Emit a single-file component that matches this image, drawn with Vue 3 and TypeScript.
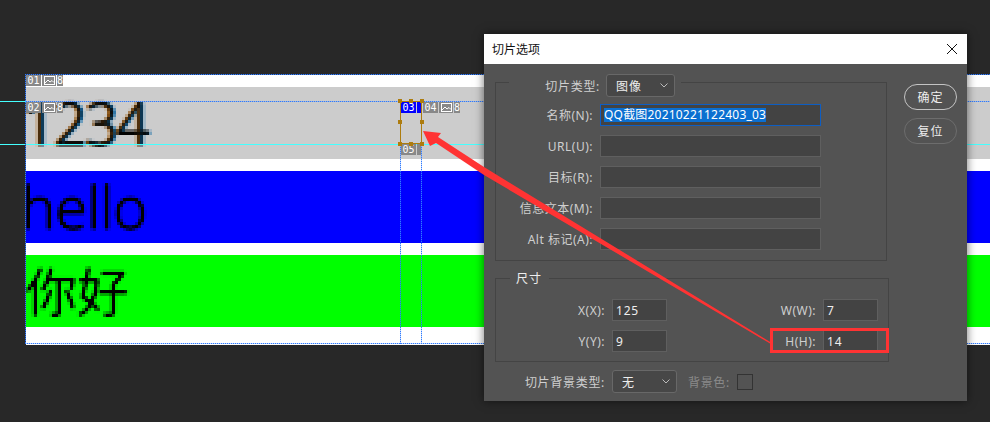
<template>
  <div class="page">
    <svg class="defs" width="0" height="0" aria-hidden="true">
      <!-- the document is zoomed in, so its text shows chunky 3px pixels -->
      <filter id="pixelate" x="0" y="0" width="1" height="1" color-interpolation-filters="sRGB">
        <feGaussianBlur in="SourceGraphic" stdDeviation="0.8" result="soft" />
        <feComponentTransfer in="soft" result="solid">
          <feFuncA type="linear" slope="1.7" />
        </feComponentTransfer>
        <feFlood x="1" y="1" width="1" height="1" />
        <feComposite width="3" height="3" />
        <feTile result="grid" />
        <feComposite in="solid" in2="grid" operator="in" />
        <feMorphology operator="dilate" radius="1" />
      </filter>
    </svg>

    <!-- document being sliced -->
    <section class="canvas">
      <div class="strip" />
      <div class="band band--gray"><span class="big big--digits">1234</span></div>
      <div class="strip" />
      <div class="band band--blue"><span class="big big--latin">hello</span></div>
      <div class="strip" />
      <div class="band band--green"><span class="big big--cjk">你好</span></div>
      <div class="strip strip--end" />
    </section>

    <!-- guides and slices sit on a free canvas -->
    <i class="guide" style="top: 144px; left: 0; width: 990px" />
    <i class="guide" style="top: 101px; left: 0; width: 26px" />
    <i class="dots dots--h" style="top: 74px; left: 25px; width: 965px" />
    <i class="dots dots--h" style="top: 101px; left: 26px; width: 964px" />
    <i class="dots dots--h" style="top: 343px; left: 25px; width: 965px" />
    <i class="dots dots--v" style="top: 74px; left: 25px; height: 270px" />
    <i class="dots dots--v" style="top: 101px; left: 400px; height: 243px" />
    <i class="dots dots--v" style="top: 101px; left: 421px; height: 243px" />

    <div
      v-for="tag in sliceTags"
      :key="tag.id"
      class="tag"
      :class="{ 'tag--active': tag.active }"
      :style="{ left: tag.x + 'px', top: tag.y + 'px' }"
    >
      <b class="tag__cell tag__num">{{ tag.id }}</b>
      <b v-if="tag.clip" class="tag__cell tag__clip" />
      <template v-else>
        <b class="tag__cell tag__icon">
          <svg width="11" height="9" viewBox="0 0 11 9">
            <rect x="0.5" y="0.5" width="10" height="8" fill="none" stroke="#fff" />
            <path d="M1 7 4 4l2 2 2-1.5L10 6.500" fill="none" stroke="#fff" />
          </svg>
        </b>
        <b class="tag__cell tag__link">8</b>
      </template>
    </div>

    <div class="selection">
      <i v-for="h in handles" :key="h" class="handle" :class="h" />
    </div>

    <!-- dialog -->
    <div class="dialog">
      <header class="dialog__title">
        <span>切片选项</span>
        <svg width="12" height="12" viewBox="0 0 12 12">
          <path d="M1 1 11 11M11 1 1 11" stroke="#111" stroke-width="1" fill="none" />
        </svg>
      </header>

      <div class="dialog__body">
        <div class="main">
          <div class="group group--slice">
            <div class="legend legend--type">
              <label class="lbl lbl--wide">切片类型:</label>
              <div class="select select--type">
                <span>图像</span>
                <svg class="chev" width="8" height="5" viewBox="0 0 8 5"><path d="M.5.5 4 4 7.500.5" /></svg>
              </div>
            </div>
            <div class="fields">
              <template v-for="f in fields" :key="f.label">
                <label class="lbl">{{ f.label }}</label>
                <div class="input" :class="{ 'input--focus': f.value }">
                  <span v-if="f.value" class="picked">{{ f.value }}</span>
                </div>
              </template>
            </div>
          </div>

          <div class="group group--size">
            <div class="legend legend--size">尺寸</div>
            <div class="sizes">
              <template v-for="s in sizes" :key="s.label">
                <label class="lbl">{{ s.label }}</label>
                <div class="input input--num">{{ s.value }}</div>
              </template>
            </div>
          </div>

          <div class="bg-row">
            <label class="lbl lbl--wide lbl--bg">切片背景类型:</label>
            <div class="select select--bg">
              <span>无</span>
              <svg class="chev" width="8" height="5" viewBox="0 0 8 5"><path d="M.5.5 4 4 7.500.5" /></svg>
            </div>
            <span class="lbl lbl--wide lbl--off">背景色:</span>
            <i class="swatch" />
          </div>
        </div>

        <div class="actions">
          <button class="btn btn--primary">确定</button>
          <button class="btn">复位</button>
        </div>
      </div>
    </div>

    <!-- red annotation on top of everything -->
    <svg class="annotation" width="990" height="422" viewBox="0 0 990 422">
      <polygon
        points="423,131 441,133 438,137 484,167 771,342.500 770,343.500 484,175 436,143 430,146"
        fill="#ff3333"
      />
      <rect x="771.500" y="329.500" width="116" height="22" fill="none" stroke="#ff3333" stroke-width="3" />
    </svg>
  </div>
</template>

<script setup lang="ts">
interface SliceTag {
  id: string
  x: number
  y: number
  active?: boolean
  clip?: boolean
}

const sliceTags: SliceTag[] = [
  { id: '01', x: 26, y: 75 },
  { id: '02', x: 26, y: 102 },
  { id: '03', x: 401, y: 102, active: true, clip: true },
  { id: '04', x: 423, y: 102 },
  { id: '05', x: 401, y: 144, clip: true },
]

const handles = ['tl', 'tc', 'tr', 'ml', 'mr', 'bl', 'bc', 'br']

const fields = [
  { label: '名称(N):', value: 'QQ截图20210221122403_03' },
  { label: 'URL(U):', value: '' },
  { label: '目标(R):', value: '' },
  { label: '信息文本(M):', value: '' },
  { label: 'Alt 标记(A):', value: '' },
]

const sizes = [
  { label: 'X(X):', value: '125' },
  { label: 'W(W):', value: '7' },
  { label: 'Y(Y):', value: '9' },
  { label: 'H(H):', value: '14' },
]
</script>

<style>
html,
body {
  margin: 0;
  background: #282828;
}
</style>

<style scoped>
.page {
  position: relative;
  width: 990px;
  height: 422px;
  overflow: hidden;
  background: #282828;
  padding: 75px 0 0 26px;
  box-sizing: border-box;
  font-family: "Noto Sans", "Noto Sans CJK SC", sans-serif;
  font-size: 12px;
}

.defs {
  position: absolute;
}

.canvas {
  width: 964px;
  display: flex;
  flex-direction: column;
  background: #fff;
  overflow: hidden;
}

.strip {
  height: 12px;
}

.strip--end {
  height: 18px;
}

.band {
  height: 72px;
  display: flex;
  align-items: center;
}

.band--gray {
  background: #ccc;
}

.band--blue {
  background: #00f;
}

.band--green {
  background: #0f0;
}

.big {
  color: #000;
  font-size: 58px;
  line-height: 72px;
  font-weight: 300;
  font-family: "Open Sans", "Noto Sans CJK SC", sans-serif;
  filter: url(#pixelate);
}

.big--digits {
  margin-left: -3px;
  letter-spacing: -2px;
  /* the source text was LCD-antialiased before it got zoomed */
  text-shadow: -2px 0 rgba(178, 108, 28, 0.75), 2px 0 rgba(30, 125, 190, 0.75);
}

.big--latin {
  margin-left: -5px;
}

.big--cjk {
  font-family: "Noto Sans CJK SC", sans-serif;
  font-size: 52px;
  margin: -3px 0 0 -1px;
}

.guide {
  position: absolute;
  height: 1px;
  background: #4ff;
}

.dots {
  position: absolute;
}

.dots--h {
  height: 1px;
  background: repeating-linear-gradient(to right, #2f7bff 0 1px, rgba(47, 123, 255, 0.3) 1px 2px);
}

.dots--v {
  width: 1px;
  background: repeating-linear-gradient(to bottom, #2f7bff 0 1px, rgba(47, 123, 255, 0.3) 1px 2px);
}

.tag {
  position: absolute;
  display: flex;
  gap: 1px;
  height: 11px;
  font-family: "DejaVu Sans Mono", monospace;
  font-size: 10px;
  line-height: 11px;
  color: #fff;
}

.tag__cell {
  display: flex;
  align-items: center;
  justify-content: center;
  font-weight: 400;
  background: #888;
}

.tag__num {
  width: 15px;
}

.tag__icon {
  width: 14px;
}

.tag__link {
  width: 6px;
}

.tag__clip {
  width: 4px;
  background: #888;
}

.tag--active .tag__num,
.tag--active .tag__clip {
  background: #00f;
}

.selection {
  position: absolute;
  left: 400px;
  top: 101px;
  width: 20px;
  height: 41px;
  border: 1px solid #ad7c0e;
}

.handle {
  position: absolute;
  width: 4px;
  height: 4px;
  background: #ad7c0e;
}

.tl, .tc, .tr { top: -3px; }
.bl, .bc, .br { bottom: -3px; }
.ml, .mr { top: 18px; }
.tl, .ml, .bl { left: -3px; }
.tc, .bc { left: 8px; }
.tr, .mr, .br { right: -3px; }

.dialog {
  position: absolute;
  left: 484px;
  top: 34px;
  width: 483px;
  height: 367px;
  background: #535353;
  box-shadow: 0 0 9px rgba(0, 0, 0, 0.55);
  color: #d6d6d6;
}

.dialog__title {
  height: 30px;
  background: #fff;
  color: #111;
  display: flex;
  align-items: center;
  justify-content: space-between;
  padding: 0 9px 0 8px;
}

.dialog__body {
  display: flex;
  padding: 18px 0 0 11px;
  gap: 15px;
}

.main {
  width: 394px;
}

.group {
  border: 1px solid #444;
  box-sizing: border-box;
}

.group--slice {
  width: 392px;
  height: 179px;
}

.group--size {
  margin-top: 17px;
  height: 84px;
}

.legend {
  margin-top: -9px;
  background: #535353;
  width: fit-content;
}

.legend--type {
  display: flex;
  align-items: center;
  justify-content: flex-end;
  gap: 6px;
  margin-left: 13px;
  width: 166px;
  padding-right: 6px;
}

.legend--size {
  margin-left: 14px;
  padding: 0 7px 0 6px;
  height: 18px;
  line-height: 18px;
  color: #eee;
  letter-spacing: 1px;
}

.fields {
  display: grid;
  grid-template-columns: 97px 221px;
  column-gap: 7px;
  row-gap: 9px;
  margin-top: 7px;
  align-items: center;
}

.sizes {
  display: grid;
  grid-template-columns: 109px 55px 1fr 55px;
  column-gap: 7px;
  row-gap: 9px;
  margin-top: 11px;
  padding-right: 10px;
  align-items: center;
}

.lbl {
  text-align: right;
  color: #cfcfcf;
  white-space: nowrap;
  letter-spacing: 0.5px;
}

.lbl--wide {
  letter-spacing: 0.7px;
}

.input {
  height: 22px;
  box-sizing: border-box;
  background: #434343;
  border: 1px solid #5f5f5f;
  display: flex;
  align-items: center;
  padding-left: 3px;
  color: #eee;
  overflow: hidden;
}

.input--focus {
  border-color: #0d5ec4;
}

.input--num {
  padding-left: 3px;
  letter-spacing: 0.8px;
}

.picked {
  background: #0b6fd0;
  color: #fff;
  line-height: 14px;
  white-space: nowrap;
  letter-spacing: 0.2px;
}

.select {
  height: 23px;
  box-sizing: border-box;
  background: #474747;
  border: 1px solid #686868;
  border-radius: 3px;
  display: flex;
  align-items: center;
  justify-content: space-between;
  color: #eee;
  padding: 0 6px 0 9px;
  letter-spacing: 1px;
}

.select--type {
  width: 69px;
}

.select--bg {
  width: 65px;
}

.chev {
  fill: none;
  stroke: #bbb;
  stroke-width: 1;
}

.bg-row {
  display: flex;
  align-items: center;
  margin-top: 8px;
}

.lbl--bg {
  width: 110px;
  margin-right: 7px;
}

.lbl--off {
  margin-left: 8px;
  color: #8a8a8a;
  width: 45px;
}

.swatch {
  width: 16px;
  height: 16px;
  box-sizing: border-box;
  margin-left: 7px;
  border: 1px solid #333;
  background: #535353;
}

.actions {
  display: flex;
  flex-direction: column;
  gap: 8px;
  padding-top: 2px;
}

.btn {
  width: 53px;
  height: 26px;
  box-sizing: border-box;
  border-radius: 13px;
  border: 1px solid #6d6d6d;
  background: #535353;
  color: #eee;
  font: inherit;
  padding: 0;
  letter-spacing: 1px;
}

.btn--primary {
  border-color: #c4c4c4;
}

.annotation {
  position: absolute;
  left: 0;
  top: 0;
  pointer-events: none;
}
</style>
